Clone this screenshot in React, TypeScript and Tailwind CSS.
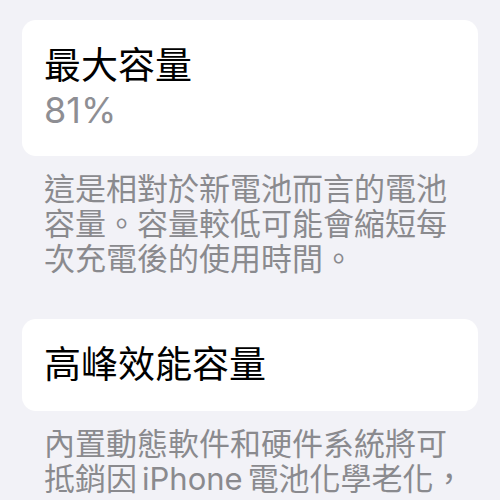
export default function App() {
  return (
    <div
      className="min-h-[500px] w-[500px] bg-[#f2f2f7] pt-5 overflow-hidden"
      style={{ fontFamily: 'Inter, "Noto Sans CJK TC", sans-serif' }}
    >
      {/* Maximum capacity */}
      <div className="mx-[22px] rounded-[14px] bg-white px-[22px] py-6">
        <div className="text-[37px] leading-[44px] text-black">最大容量</div>
        <div className="text-[36px] leading-[44px] text-[#8e8e93]">81%</div>
      </div>
      <p className="mt-[15px] pl-[44px] pr-[31px] text-[31px] leading-[35px] text-[#8a8a8e]">
        這是相對於新電池而言的電池容量。容量較低可能會縮短每次充電後的使用時間。
      </p>

      {/* Peak performance */}
      <div className="mx-[22px] mt-[43px] rounded-[14px] bg-white px-[22px] py-6">
        <div className="text-[37px] leading-[44px] text-black">高峰效能容量</div>
      </div>
      <p className="mt-[15px] pl-[44px] pr-[31px] text-[31px] leading-[35px] text-[#8a8a8e]">
        內置動態軟件和硬件系統將可抵銷因<span className="mx-[5px]">iPhone</span>電池化學老化，
      </p>
    </div>
  );
}
